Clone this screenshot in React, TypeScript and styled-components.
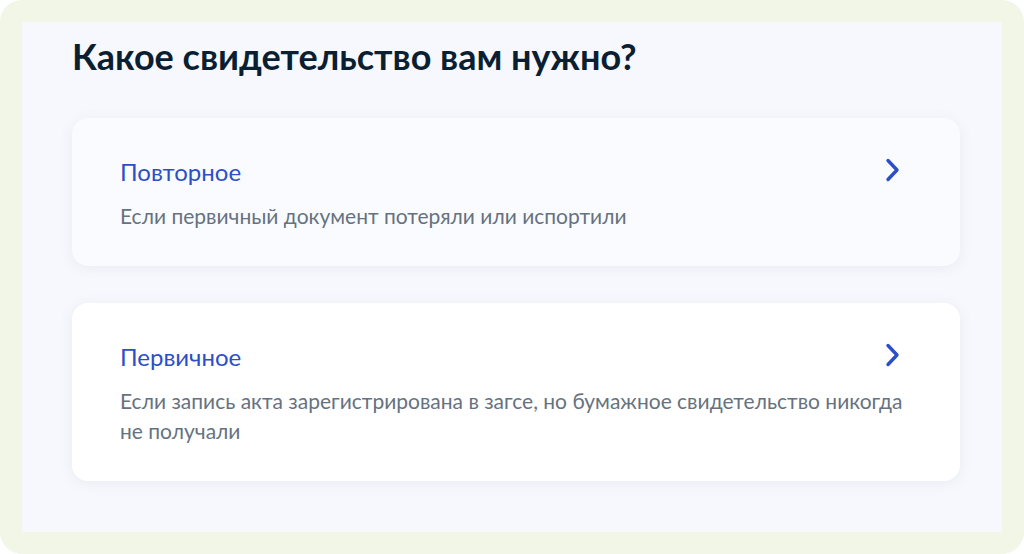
import React from "react";
import styled, { createGlobalStyle } from "styled-components";

const Global = createGlobalStyle`
  html, body { margin: 0; padding: 0; background: #ffffff; }
  * { box-sizing: border-box; }
`;

const Frame = styled.div`
  width: 1024px;
  height: 554px;
  background: #f2f6e7;
  border-radius: 22px;
  padding: 22px;
  font-family: Lato, "Noto Sans", sans-serif;
`;

const Panel = styled.div`
  width: 980px;
  height: 510px;
  background: #f7f8fd;
  padding: 12px 42px 0 50px;
  display: flex;
  flex-direction: column;
`;

const Heading = styled.h1`
  margin: 0;
  font-size: 36px;
  line-height: 44px;
  font-weight: 700;
  color: #0b1f33;
`;

const List = styled.div`
  margin-top: 40px;
  display: flex;
  flex-direction: column;
  gap: 37px;
`;

const Card = styled.div<{ $muted?: boolean }>`
  background: ${(p) => (p.$muted ? "#fafbff" : "#ffffff")};
  border-radius: 16px;
  box-shadow: 0 2px 14px rgba(92, 110, 160, 0.09);
  padding: 38px 48px 35px 48px;
  display: grid;
  grid-template-columns: 1fr auto;
  row-gap: 13px;
  align-items: start;
`;

const Title = styled.div`
  font-size: 24px;
  line-height: 32px;
  color: #2c4fc8;
`;

const Desc = styled.div`
  grid-column: 1 / -1;
  font-size: 21px;
  line-height: 30px;
  color: #66727f;
`;

const Chevron = styled.svg`
  width: 18px;
  height: 26px;
  margin: 1px 10px 0 0;
`;

const Arrow = () => (
  <Chevron viewBox="0 0 18 26" fill="none">
    <path d="M4 3.5 L13 13 L4 22.5" stroke="#2c4fc8" strokeWidth="3.4" strokeLinecap="round" strokeLinejoin="round" />
  </Chevron>
);

const items = [
  { title: "Повторное", desc: "Если первичный документ потеряли или испортили", muted: true },
  {
    title: "Первичное",
    desc: "Если запись акта зарегистрирована в загсе, но бумажное свидетельство никогда не получали",
    muted: false,
  },
];

export default function App() {
  return (
    <>
      <Global />
      <Frame>
        <Panel>
          <Heading>Какое свидетельство вам нужно?</Heading>
          <List>
            {items.map((it) => (
              <Card key={it.title} $muted={it.muted}>
                <Title>{it.title}</Title>
                <Arrow />
                <Desc>{it.desc}</Desc>
              </Card>
            ))}
          </List>
        </Panel>
      </Frame>
    </>
  );
}
